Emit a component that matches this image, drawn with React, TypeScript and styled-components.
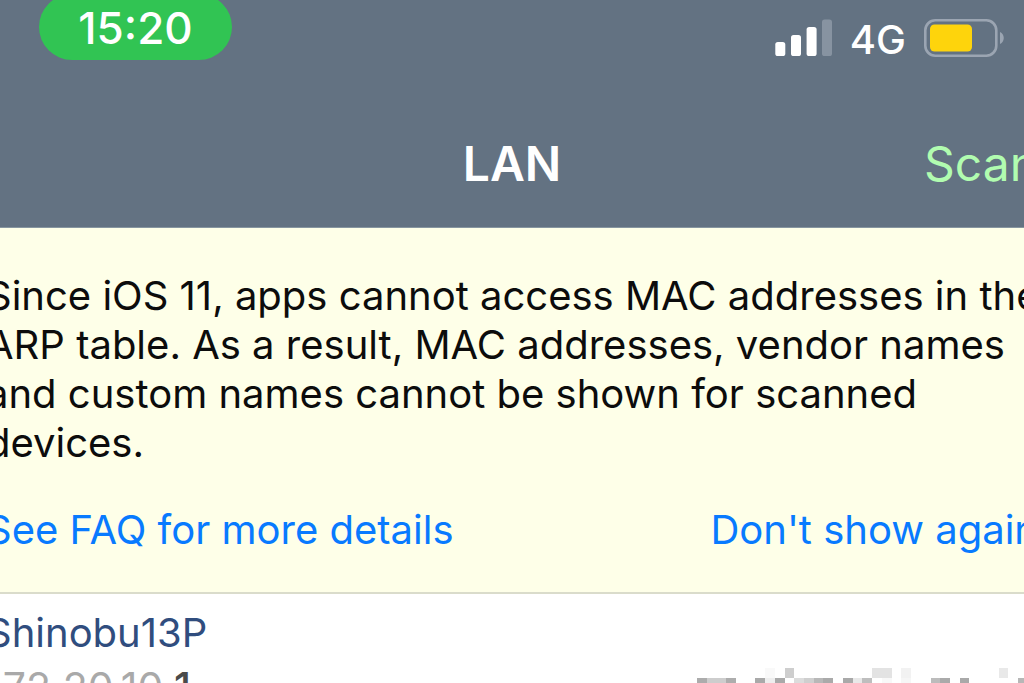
import React from "react";
import styled, { createGlobalStyle } from "styled-components";

const GlobalStyle = createGlobalStyle`
  * { box-sizing: border-box; }
  html, body { margin: 0; height: 100%; overflow: hidden; background: #fff; }
  body { font-family: Inter, "Liberation Sans", sans-serif; font-size: 40px; line-height: 49px; }
  h1, h2, p { margin: 0; font-size: inherit; font-weight: inherit; }
  button { border: 0; padding: 0; background: none; font: inherit; cursor: pointer; }
`;

const Viewport = styled.div`
  height: 100vh;
  overflow: hidden;
`;

/* The screen is magnified, so both of its edges run past the window. */
const Screen = styled.div`
  margin: 0 -40px;
`;

const Header = styled.header`
  background: #637282;
  border-bottom: 1px solid #8796a0;
`;

const StatusBar = styled.div`
  display: flex;
  justify-content: space-between;
  align-items: flex-start;
  padding: 0 60px 0 79px;
`;

const TimePill = styled.time`
  width: 193px;
  height: 66px;
  margin-top: -6px;
  padding-top: 10px;
  border-radius: 33px;
  background: #31c453;
  color: #fff;
  font-size: 44px;
  font-weight: 500;
  text-align: center;
`;

const Indicators = styled.div`
  display: flex;
  align-items: center;
  gap: 18px;
  padding-top: 15px;
  color: #fff;
  font-weight: 500;

  svg { display: block; margin-bottom: 4px; }
`;

const NavBar = styled.nav`
  display: grid;
  grid-template-columns: 1fr auto 1fr;
  align-items: center;
  padding: 72px 26px 35px;
  font-size: 48px;
  line-height: 56px;
`;

const Title = styled.h1`
  grid-column: 2;
  color: #fff;
  font-weight: 600;
`;

const ScanButton = styled.button`
  justify-self: end;
  color: #b1fcb0;
`;

const Notice = styled.section`
  padding: 43px 8px 38px 26px;
  border-bottom: 2px solid #dadccb;
  background: #feffe8;
  color: #0c0c0c;
`;

const NoticeActions = styled.div`
  display: flex;
  justify-content: space-between;
  margin-top: 38px;
  padding-right: 18px;
  color: #087aff;

  a { color: inherit; text-decoration: none; }
  button { color: inherit; }
`;

const Device = styled.article`
  padding: 14px 0 14px 26px;
  background: #fff;
`;

const DeviceName = styled.h2`
  color: #304d7e;
`;

const DeviceDetails = styled.div`
  display: flex;
  justify-content: space-between;
  align-items: flex-start;
`;

const Address = styled.p`
  margin-top: 6px;
  color: #a9a9a9;
  font-size: 41px;

  strong { color: #4a4a4a; font-weight: 500; }
`;

const Masked = styled.svg`
  display: block;
  margin: 11px 30px 0 0;
`;

const MASK: [number, number, number, string][] = [
  [7, 0, 1, "#f9f9f9"], [9, 0, 1, "#cecece"], [18, 0, 2, "#e3e3e3"],
  [21, 0, 1, "#f2f2f2"], [31, 0, 1, "#e9e9e9"],
  [0, 1, 1, "#acacac"], [1, 1, 2, "#cdcdcd"], [3, 1, 1, "#adadad"],
  [6, 1, 1, "#a9a9a9"], [7, 1, 1, "#eeeeee"], [8, 1, 1, "#a9a9a9"],
  [10, 1, 1, "#dcdcdc"], [11, 1, 1, "#cfcfcf"], [12, 1, 1, "#b8b8b8"],
  [13, 1, 1, "#aaaaaa"], [15, 1, 1, "#a9a9a9"], [16, 1, 1, "#e8e8e8"],
  [17, 1, 1, "#bebebe"], [19, 1, 1, "#f8f8f8"], [21, 1, 1, "#f6f6f6"],
  [24, 1, 1, "#bcbcbc"], [25, 1, 1, "#aaaaaa"], [27, 1, 1, "#a9a9a9"],
  [33, 1, 1, "#b7b7b7"],
];

function Signal() {
  return (
    <svg width="57" height="38" viewBox="0 0 57 38" fill="#fff" role="img" aria-label="Signal: 3 of 4 bars">
      <rect x="0.3" y="23" width="10" height="14" rx="2.6" />
      <rect x="16" y="16" width="10" height="21" rx="2.6" />
      <rect x="31.6" y="8" width="10" height="29" rx="2.6" />
      <rect x="47" y="0.5" width="10" height="36.5" rx="2.6" fill="#8793a1" />
    </svg>
  );
}

function Battery() {
  return (
    <svg width="80" height="38" viewBox="0 0 80 38" role="img" aria-label="Battery 65%">
      <rect x="1.3" y="1.3" width="71" height="35.4" rx="10" fill="none" stroke="#9ba5b2" strokeWidth="2.6" />
      <rect x="6" y="5.5" width="42" height="27" rx="4.5" fill="#fed40c" />
      <path d="M76 13c5 2 5 10 0 12z" fill="#9ba5b2" />
    </svg>
  );
}

export default function App() {
  return (
    <Viewport>
      <GlobalStyle />
      <Screen>
        <Header>
          <StatusBar>
            <TimePill>15:20</TimePill>
            <Indicators>
              <Signal />
              <span>4G</span>
              <Battery />
            </Indicators>
          </StatusBar>
          <NavBar>
            <Title>LAN</Title>
            <ScanButton type="button">Scan</ScanButton>
          </NavBar>
        </Header>
        <main>
          <Notice>
            <p>
              Since iOS 11, apps cannot access MAC addresses in the ARP table. As a result, MAC
              addresses, vendor names and custom names cannot be shown for scanned devices.
            </p>
            <NoticeActions>
              <a href="#faq">See FAQ for more details</a>
              <button type="button">Don't show again</button>
            </NoticeActions>
          </Notice>
          <Device>
            <DeviceName>Shinobu13P</DeviceName>
            <DeviceDetails>
              <Address>172.20.10.<strong>1</strong></Address>
              <Masked width="337" height="20" viewBox="0 0 337 20" shapeRendering="crispEdges" aria-hidden="true">
                {MASK.map(([col, row, span, fill]) => (
                  <rect key={`${col}-${row}`} x={col * 9.73} y={row * 10} width={span * 9.73} height="10" fill={fill} />
                ))}
              </Masked>
            </DeviceDetails>
          </Device>
        </main>
      </Screen>
    </Viewport>
  );
}
